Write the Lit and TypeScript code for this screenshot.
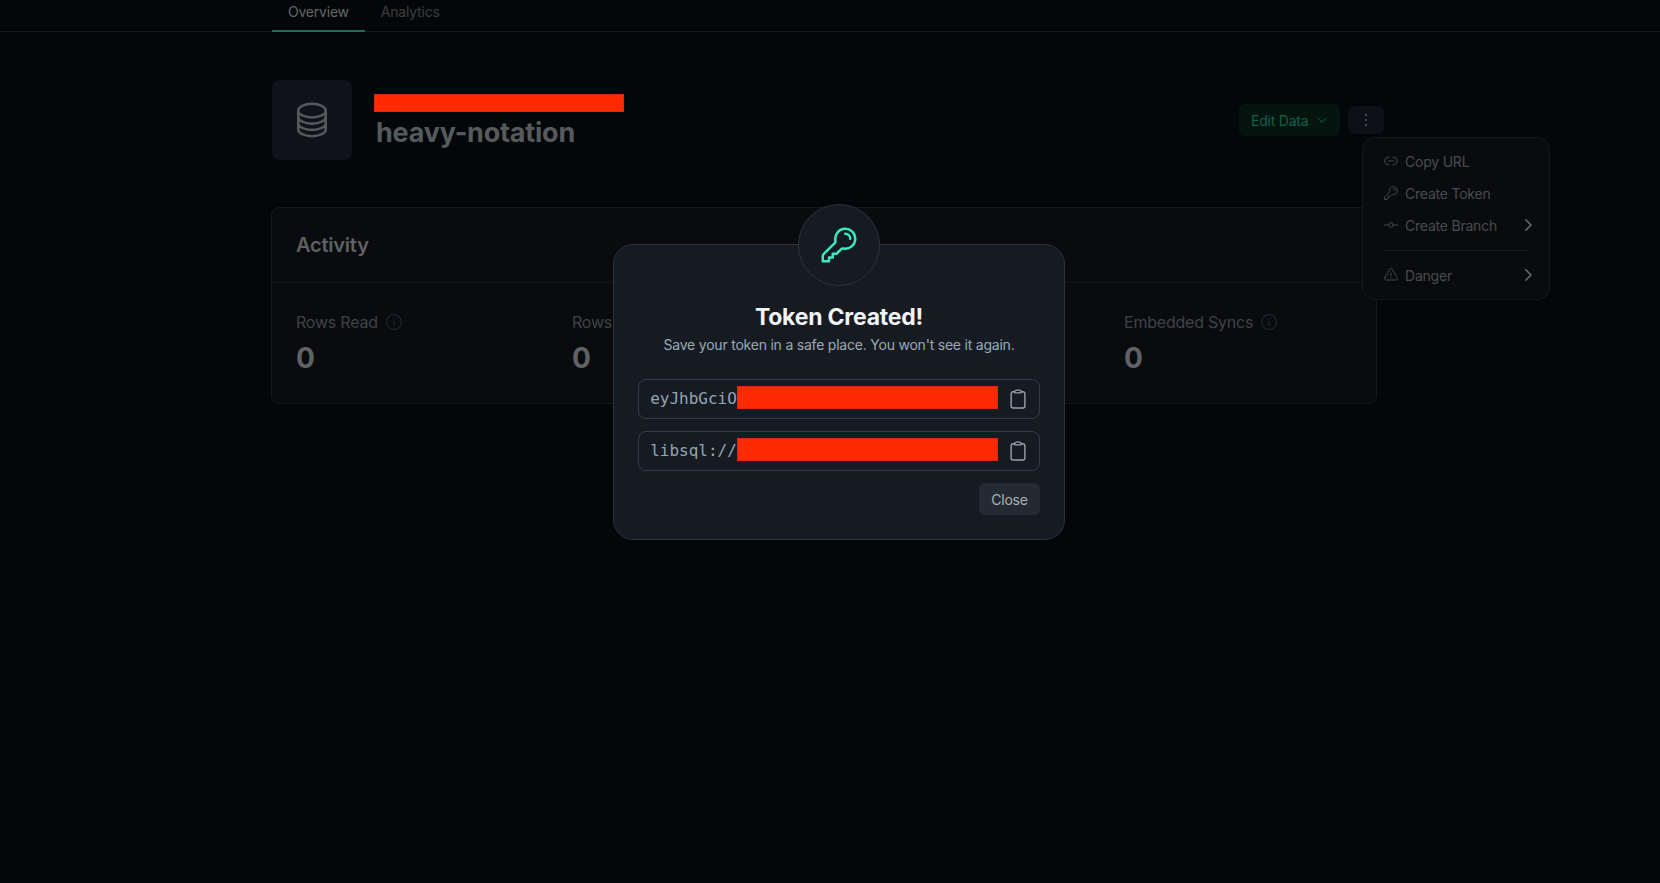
import { LitElement, html, css, svg } from "lit";
import { customElement } from "lit/decorators.js";

const hero = (d: string, size: number, cls = "") => html`<svg class=${cls} width=${size} height=${size} viewBox="0 0 24 24" fill="none" stroke="currentColor" stroke-width="1.5" stroke-linecap="round" stroke-linejoin="round">${svg`<path d=${d}></path>`}</svg>`;

const KEY = "M15.75 5.25a3 3 0 013 3m3 0a6 6 0 01-7.029 5.912c-.563-.097-1.159.026-1.563.43L10.5 17.25H8.25v2.25H6v2.25H2.25v-2.818c0-.597.237-1.17.659-1.591l6.499-6.499c.404-.404.527-1 .43-1.563A6 6 0 1121.75 8.25z";
const CLIP = "M15.666 3.888A2.25 2.25 0 0013.5 2.25h-3c-1.03 0-1.9.693-2.166 1.638m7.332 0c.055.194.084.4.084.612v0a.75.75 0 01-.75.75H9a.75.75 0 01-.75-.75v0c0-.212.03-.418.084-.612m7.332 0c.646.049 1.288.11 1.927.184 1.1.128 1.907 1.077 1.907 2.185V19.5a2.25 2.25 0 01-2.25 2.25H6.75A2.25 2.25 0 014.5 19.5V6.257c0-1.108.806-2.057 1.907-2.185a48.208 48.208 0 011.927-.184";
const DB = "M20.25 6.375c0 2.278-3.694 4.125-8.25 4.125S3.75 8.653 3.75 6.375m16.5 0c0-2.278-3.694-4.125-8.25-4.125S3.75 4.097 3.75 6.375m16.5 0v11.25c0 2.278-3.694 4.125-8.25 4.125s-8.25-1.847-8.25-4.125V6.375m16.5 0v3.75m-16.5-3.75v3.75m16.5 0v3.75C20.25 16.153 16.556 18 12 18s-8.25-1.847-8.25-4.125v-3.75m16.5 0c0 2.278-3.694 4.125-8.25 4.125s-8.25-1.847-8.25-4.125";
const WARN = "M12 9v3.75m-9.303 3.376c-.866 1.5.217 3.374 1.948 3.374h14.71c1.73 0 2.813-1.874 1.948-3.374L13.949 3.378c-.866-1.5-3.032-1.5-3.898 0L2.697 16.126zM12 15.75h.007v.008H12v-.008z";
const INFO = "M11.25 11.25l.041-.02a.75.75 0 011.063.852l-.708 2.836a.75.75 0 001.063.853l.041-.021M21 12a9 9 0 11-18 0 9 9 0 0118 0zm-9-3.75h.008v.008H12V8.25z";
const LINK = "M9 6.5H8a5.5 5.5 0 000 11h1m6-11h1a5.5 5.5 0 010 11h-1M8 12h8";
const COMMIT = "M1.5 12H8.5m7 0h7M15.5 12a3.5 3.5 0 11-7 0 3.5 3.5 0 017 0z";
const CHEV_R = "M9 5l7 7-7 7";
const CHEV_D = "M5.5 9l6.5 6.5L18.5 9";

@customElement("app-root")
export class AppRoot extends LitElement {
  static styles = css`
    :host {
      display: block;
      position: relative;
      width: 1660px;
      height: 883px;
      overflow: hidden;
      background: #03070a;
      font-family: Inter, "Noto Sans", sans-serif;
      letter-spacing: -0.0135em;
      color: #6a6d70;
    }
    .tabs {
      display: flex;
      height: 32px;
      padding-left: 272px;
      border-bottom: 1px solid #11171a;
      box-sizing: border-box;
      font-size: 14px;
    }
    .tab {
      padding: 0 16px;
      height: 32px;
      box-sizing: border-box;
      line-height: 24px;
      color: #3c3f42;
    }
    .tab.active {
      color: #63676a;
      border-bottom: 2px solid #1e6b58;
    }
    .main {
      width: 1112px;
      margin-left: 272px;
      padding-top: 48px;
    }
    .head {
      display: flex;
      align-items: center;
      justify-content: space-between;
    }
    .ident {
      display: flex;
      align-items: center;
      gap: 22px;
    }
    .dbbox {
      width: 80px;
      height: 80px;
      border-radius: 8px;
      background: #0f1318;
      color: #55585b;
      display: flex;
      align-items: center;
      justify-content: center;
    }
    .redact {
      background: #ff2a00;
      box-shadow: inset 0 0 0 1px #d92a0c;
      flex: none;
    }
    .names {
      padding-top: 4px;
    }
    .redact.title {
      width: 250px;
      height: 18px;
      margin-bottom: 3px;
    }
    .name {
      font-size: 27px;
      font-weight: 700;
      line-height: 36px;
      color: #565a5c;
      padding-left: 2px;
    }
    .actions {
      display: flex;
      align-items: center;
      gap: 8px;
    }
    .edit {
      width: 101px;
      height: 32px;
      box-sizing: border-box;
      border-radius: 6px;
      background: #06140f;
      color: #125f4c;
      font-size: 14px;
      display: flex;
      align-items: center;
      gap: 6px;
      padding-left: 12px;
    }
    .kebab {
      width: 36px;
      height: 28px;
      border-radius: 6px;
      background: #0d1115;
      color: #5a5d60;
      display: flex;
      flex-direction: column;
      align-items: center;
      justify-content: center;
      gap: 3px;
    }
    .kebab i {
      width: 2px;
      height: 2px;
      background: currentColor;
      border-radius: 50%;
    }
    .card {
      margin-top: 47px;
      margin-left: -1px;
      width: 1106px;
      height: 197px;
      box-sizing: border-box;
      border: 1px solid #12181c;
      border-radius: 8px;
      background: #090b0e;
    }
    .card-head {
      height: 75px;
      box-sizing: border-box;
      border-bottom: 1px solid #12171b;
      padding-left: 24px;
      display: flex;
      align-items: center;
      font-size: 20px;
      font-weight: 600;
      color: #5e6163;
    }
    .stats {
      display: grid;
      grid-template-columns: repeat(4, 1fr);
      padding-top: 27px;
    }
    .stat {
      padding-left: 24px;
    }
    .label {
      display: flex;
      align-items: center;
      gap: 6px;
      font-size: 16px;
      line-height: 24px;
      color: #3f4347;
    }
    .label svg {
      color: #1a252c;
    }
    .value {
      font-size: 28px;
      font-weight: 700;
      line-height: 36px;
      margin-top: 6px;
      color: #5f6264;
    }
    .menu {
      position: absolute;
      left: 1362px;
      top: 137px;
      width: 188px;
      height: 163px;
      box-sizing: border-box;
      padding: 7px 0;
      border: 1px solid #14191d;
      border-radius: 12px;
      background: #090b0e;
      font-size: 14px;
      color: #494c4f;
    }
    .item {
      height: 32px;
      display: flex;
      align-items: center;
      padding-left: 20px;
      padding-right: 12px;
      gap: 6px;
    }
    .item .label-t {
      flex: 1;
    }
    .item svg {
      color: #44474a;
    }
    .item svg.chev {
      color: #6b6e71;
      stroke-width: 2;
    }
    .sep {
      height: 1px;
      background: #171c22;
      margin: 9px 20px 8px 20px;
    }
    .modal {
      position: absolute;
      left: 613px;
      top: 244px;
      width: 452px;
      height: 296px;
      box-sizing: border-box;
      padding: 58px 24px 0;
      background: #161b22;
      border: 1px solid #2a343c;
      border-radius: 20px;
      text-align: center;
    }
    .badge {
      position: absolute;
      left: 184px;
      top: -41px;
      width: 82px;
      height: 82px;
      box-sizing: border-box;
      border-radius: 50%;
      background: #161b22;
      border: 1px solid #2a343c;
      color: #3be8c0;
      display: flex;
      align-items: center;
      justify-content: center;
    }
    h2 {
      margin: 0;
      font-size: 23px;
      font-weight: 700;
      line-height: 28px;
      color: #f1f3f5;
    }
    .sub {
      margin: 0;
      font-size: 14px;
      line-height: 20px;
      margin-top: 4px;
      color: #9ca8b4;
    }
    .field {
      height: 40px;
      box-sizing: border-box;
      border: 1px solid #323d47;
      border-radius: 8px;
      display: flex;
      align-items: center;
      padding-left: 11px;
      margin-top: 12px;
      font-family: "DejaVu Sans Mono", monospace;
      letter-spacing: 0;
      font-size: 16px;
      color: #94a5b2;
    }
    .sub + .field {
      margin-top: 24px;
    }
    .field .mono {
      width: 87px;
      white-space: nowrap;
      margin-bottom: 2px;
    }
    .field .redact {
      width: 261px;
      height: 23px;
      margin-bottom: 3px;
    }
    .field svg {
      margin-left: 9px;
      color: #98a3ad;
    }
    .foot {
      display: flex;
      justify-content: flex-end;
      margin-top: 12px;
    }
    .close {
      width: 61px;
      height: 32px;
      border-radius: 6px;
      background: #232a31;
      color: #a8b2bb;
      font-size: 14px;
      display: flex;
      align-items: center;
      justify-content: center;
    }
  `;

  private stat(name: string) {
    return html`<div class="stat">
      <div class="label">${name}${hero(INFO, 20)}</div>
      <div class="value">0</div>
    </div>`;
  }

  render() {
    return html`
      <div class="tabs">
        <div class="tab active">Overview</div>
        <div class="tab">Analytics</div>
      </div>
      <div class="main">
        <div class="head">
          <div class="ident">
            <div class="dbbox">${hero(DB, 40)}</div>
            <div class="names">
              <div class="redact title"></div>
              <div class="name">heavy-notation</div>
            </div>
          </div>
          <div class="actions">
            <div class="edit">Edit Data ${hero(CHEV_D, 16)}</div>
            <div class="kebab"><i></i><i></i><i></i></div>
          </div>
        </div>
        <div class="card">
          <div class="card-head">Activity</div>
          <div class="stats">
            ${this.stat("Rows Read")}${this.stat("Rows Written")}${this.stat("Storage")}${this.stat("Embedded Syncs")}
          </div>
        </div>
      </div>
      <div class="menu">
        <div class="item">${hero(LINK, 16)}<span class="label-t">Copy URL</span></div>
        <div class="item">${hero(KEY, 16)}<span class="label-t">Create Token</span></div>
        <div class="item">${hero(COMMIT, 16)}<span class="label-t">Create Branch</span>${hero(CHEV_R, 18, "chev")}</div>
        <div class="sep"></div>
        <div class="item">${hero(WARN, 16)}<span class="label-t">Danger</span>${hero(CHEV_R, 18, "chev")}</div>
      </div>
      <div class="modal">
        <div class="badge">${hero(KEY, 40)}</div>
        <h2>Token Created!</h2>
        <p class="sub">Save your token in a safe place. You won't see it again.</p>
        <div class="field"><span class="mono">eyJhbGciO</span><div class="redact"></div>${hero(CLIP, 22)}</div>
        <div class="field"><span class="mono">libsql://</span><div class="redact"></div>${hero(CLIP, 22)}</div>
        <div class="foot"><div class="close">Close</div></div>
      </div>
    `;
  }
}
